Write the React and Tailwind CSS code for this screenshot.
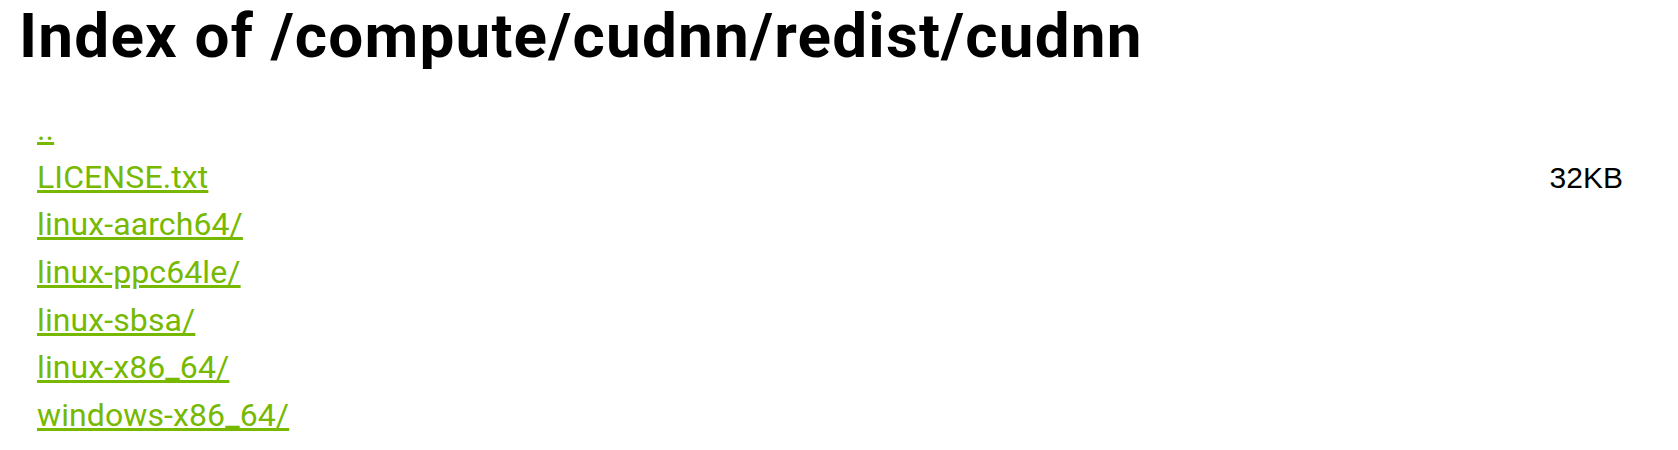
import React from 'react';

const entries = [
  { name: '..', size: '' },
  { name: 'LICENSE.txt', size: '32KB' },
  { name: 'linux-aarch64/', size: '' },
  { name: 'linux-ppc64le/', size: '' },
  { name: 'linux-sbsa/', size: '' },
  { name: 'linux-x86_64/', size: '' },
  { name: 'windows-x86_64/', size: '' },
];

const App = () => {
  return (
    <div className="w-[1678px] h-[450px] bg-white overflow-hidden font-['Roboto',sans-serif]">
      <h1 className="pl-[19px] text-[62px] leading-[72px] font-bold text-black tracking-[1.2px]">
        Index of /compute/cudnn/redist/cudnn
      </h1>
      <div className="mt-[34px] pl-[37px] pr-[55px] flex flex-col">
        {entries.map((e) => (
          <div key={e.name} className="flex justify-between items-baseline h-[47.7px] text-[32px] leading-[47.7px]">
            <a href="#" className="text-[#76b900] tracking-[0.1px] underline decoration-[3px] underline-offset-[2px]">
              {e.name}
            </a>
            <span className="text-black text-[30px] font-['Liberation_Sans',sans-serif]">{e.size}</span>
          </div>
        ))}
      </div>
    </div>
  );
};

export default App;
